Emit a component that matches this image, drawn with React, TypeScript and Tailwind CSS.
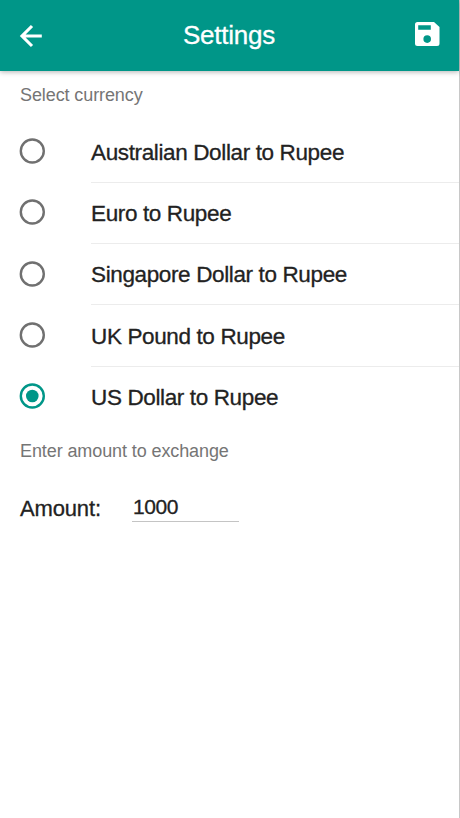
import { useState } from 'react'

const CURRENCIES = [
  'Australian Dollar to Rupee',
  'Euro to Rupee',
  'Singapore Dollar to Rupee',
  'UK Pound to Rupee',
  'US Dollar to Rupee',
]

function BackIcon() {
  return (
    <svg width="24" height="24" viewBox="0 0 24 24" fill="none" stroke="currentColor" strokeWidth="3.1">
      <path d="M22.8 12H3.5M13 2 3 12l10 10" />
    </svg>
  )
}

function SaveIcon() {
  return (
    <svg width="25" height="24" viewBox="0 0 25 24" fill="currentColor">
      <path
        fillRule="evenodd"
        d="M2.5 0H19l5.5 5v16.5A2.5 2.5 0 0 1 22 24H2.5A2.5 2.5 0 0 1 0 21.5v-19A2.5 2.5 0 0 1 2.5 0ZM3.2 3.2v4.6h12.6V3.2ZM12.2 13.3a3.8 3.8 0 1 0 0 7.6 3.8 3.8 0 0 0 0-7.6Z"
      />
    </svg>
  )
}

function Radio({ checked }: { checked: boolean }) {
  return (
    <svg
      width="26"
      height="26"
      viewBox="0 0 26 26"
      className={`mb-[2px] shrink-0 ${checked ? 'text-[#009688]' : 'text-[#707070]'}`}
    >
      <circle cx="13.3" cy="13" r="11.5" fill="none" stroke="currentColor" strokeWidth="2.4" />
      {checked && <circle cx="13.3" cy="13" r="6.3" fill="currentColor" />}
    </svg>
  )
}

export default function App() {
  const [currency, setCurrency] = useState('US Dollar to Rupee')
  const [amount, setAmount] = useState('1000')

  return (
    <div
      className="min-h-[818px] border-r border-[#c8c8c8] bg-white text-[#222]"
      style={{ fontFamily: '"Liberation Sans", Arial, sans-serif' }}
    >
      {/* App bar */}
      <header className="flex h-[71px] items-center justify-between bg-[#009688] px-[19px] text-white shadow-[0_1px_5px_rgba(0,0,0,0.3)]">
        <button aria-label="Back" className="pt-px">
          <BackIcon />
        </button>
        <h1 className="text-[26px] tracking-[-0.25px] [-webkit-text-stroke:0.3px]">Settings</h1>
        <button aria-label="Save" className="pb-[3px]">
          <SaveIcon />
        </button>
      </header>

      {/* Currency list */}
      <h2 className="h-[50.4px] pl-5 pt-3 text-[18px] leading-6 tracking-[-0.1px] text-[#757575]">Select currency</h2>
      <div role="radiogroup">
        {CURRENCIES.map((name) => (
          <button
            key={name}
            role="radio"
            aria-checked={currency === name}
            onClick={() => setCurrency(name)}
            className="group flex h-[61.3px] w-full items-center pl-[19px] text-left"
          >
            <Radio checked={currency === name} />
            <span className="ml-[46px] flex h-full grow items-center border-b border-[#ececec] pt-[2px] text-[22.5px] tracking-[-0.37px] [-webkit-text-stroke:0.3px] group-last:border-transparent">
              {name}
            </span>
          </button>
        ))}
      </div>

      {/* Amount */}
      <h2 className="h-[50.4px] pl-5 pt-[11px] text-[18px] leading-6 tracking-[-0.1px] text-[#757575]">
        Enter amount to exchange
      </h2>
      <label className="flex items-end pl-5 text-[22px] tracking-[-0.15px] [-webkit-text-stroke:0.3px]">
        <span className="w-[112px] leading-[26px]">Amount:</span>
        <input
          value={amount}
          onChange={(e) => setAmount(e.target.value)}
          className="h-[44px] w-[107px] border-b border-[#c4c4c4] pl-px pt-[14px] text-[21px] tracking-[-0.4px] outline-none"
        />
      </label>
    </div>
  )
}
